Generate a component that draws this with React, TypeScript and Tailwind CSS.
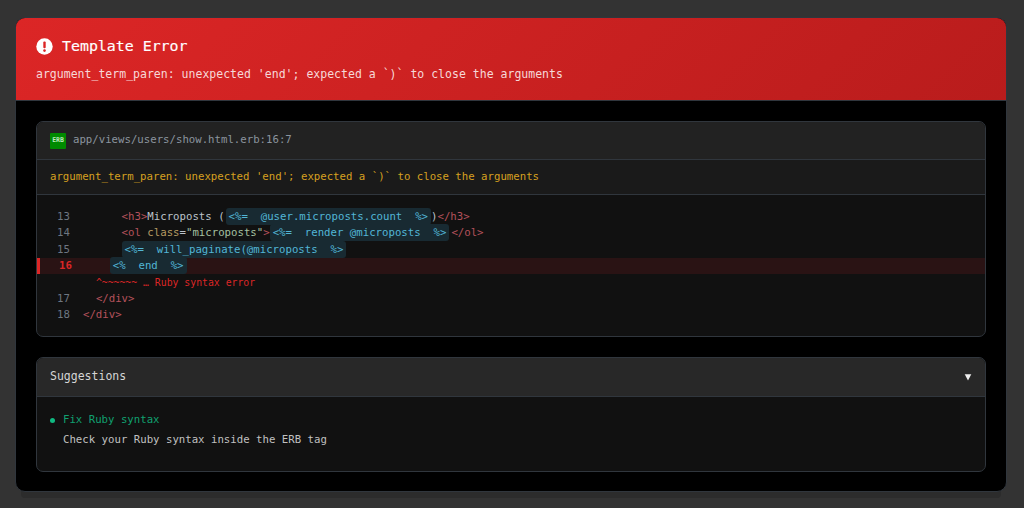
const mono = '"DejaVu Sans Mono", monospace';

function Erb({ children }: { children: string }) {
  return <span className="rounded-[3px] bg-[#182a32] px-[3px] py-[2px] text-[#52b6d6]">{children}</span>;
}

function Tag({ children }: { children: string }) {
  return <span className="text-[#b5525c]">{children}</span>;
}

function CodeLine({ num, children }: { num?: number; children: React.ReactNode }) {
  return (
    <div className="flex h-[16.35px] items-center whitespace-pre">
      <span className="w-[46px] shrink-0 pl-[20px] text-[#6e7681]">{num}</span>
      <span className="text-[#bcc3ca]">{children}</span>
    </div>
  );
}

export default function App() {
  return (
    <div className="h-[508px] overflow-hidden bg-[#333333] pl-[15px] pt-[17px]" style={{ fontFamily: mono }}>
      <div className="h-[475px] w-[992px] overflow-hidden rounded-[10px] border border-[#30363d] bg-black shadow-[0_12px_0_-6px_#2c2c2c]">
        <div className="h-[83px] border-b border-[#30363d] bg-[linear-gradient(135deg,#dc2626,#b91c1c)] px-[20px] pt-[18px]">
          <div className="flex items-center gap-[9px] text-[14.9px] leading-[21px] text-white [-webkit-text-stroke:0.15px_white]">
            <svg width="17" height="17" viewBox="0 0 17 17">
              <circle cx="8.5" cy="8.5" r="8.2" fill="#fff" />
              <rect x="7.3" y="3.6" width="2.4" height="6.6" rx="1" fill="#dc2626" />
              <circle cx="8.5" cy="12.6" r="1.3" fill="#dc2626" />
            </svg>
            Template Error
          </div>
          <p className="mt-[9px] whitespace-pre text-[11.52px] leading-[16px] text-[#f6d8d8]">
            argument_term_paren: unexpected 'end'; expected a `)` to close the arguments
          </p>
        </div>

        <div className="px-[20px] pt-[20px]">
          <div className="h-[216px] overflow-hidden rounded-[7px] border border-[#30363d] bg-[#111111]">
            <div className="flex h-[38px] items-center gap-[7px] border-b border-[#30363d] bg-[#222222] px-[13px]">
              <span className="flex h-[16px] w-[16px] items-center justify-center rounded-[1px] bg-[#008a00] text-[6.5px] font-bold text-[#bfe6bf]">
                ERB
              </span>
              <span className="text-[10.7px] text-[#8b949e]">app/views/users/show.html.erb:16:7</span>
            </div>
            <div className="flex h-[35px] items-center whitespace-pre border-b border-[#30363d] bg-[#1a1a1a] px-[13px] text-[10.7px] text-[#d6a020]">
              argument_term_paren: unexpected 'end'; expected a `)` to close the arguments
            </div>
            <div className="pt-[14px] text-[10.7px]">
              <CodeLine num={13}>
                {'      '}
                <Tag>{'<h3>'}</Tag>
                {'Microposts ('}
                <span className="ml-[1px]">
                  <Erb>{'<%=  @user.microposts.count  %>'}</Erb>
                </span>
                {')'}
                <Tag>{'</h3>'}</Tag>
              </CodeLine>
              <CodeLine num={14}>
                {'      '}
                <Tag>{'<ol '}</Tag>
                <span className="text-[#b59a62]">class</span>
                {'='}
                <span className="text-[#a5c0a0]">"microposts"</span>
                <Tag>{'>'}</Tag>
                <Erb>{'<%=  render @microposts  %>'}</Erb>
                <span className="ml-[2px]">
                  <Tag>{'</ol>'}</Tag>
                </span>
              </CodeLine>
              <CodeLine num={15}>
                {'      '}
                <Erb>{'<%=  will_paginate(@microposts  %>'}</Erb>
              </CodeLine>
              <div className="flex h-[16.35px] items-center whitespace-pre border-l-[3px] border-[#dc2626] bg-[#2a1314]">
                <span className="w-[44px] shrink-0 pl-[19px] font-bold text-[#dc2626]">16</span>
                <span className="text-[#bcc3ca]">
                  {'    '}
                  <Erb>{'<%  end  %>'}</Erb>
                </span>
              </div>
              <CodeLine>
                <span className="text-[9.8px] text-[#dc2626]">
                  <span className="text-[10.7px]">{'  '}</span>
                  {'^~~~~~~ … Ruby syntax error'}
                </span>
              </CodeLine>
              <CodeLine num={17}>
                {'  '}
                <Tag>{'</div>'}</Tag>
              </CodeLine>
              <CodeLine num={18}>
                <Tag>{'</div>'}</Tag>
              </CodeLine>
            </div>
          </div>

          <div className="mt-[20px] h-[115px] overflow-hidden rounded-[7px] border border-[#30363d] bg-[#111111]">
            <div className="flex h-[39px] items-center justify-between border-b border-[#30363d] bg-[#282828] px-[13px] text-[11.5px] text-[#d5d5d5]">
              <span>Suggestions</span>
              <svg width="8" height="8" viewBox="0 0 8 8">
                <path d="M0.7 1.2H7.3L4 7.4Z" fill="#eeeeee" />
              </svg>
            </div>
            <div className="px-[13px] pt-[15px] text-[10.7px] leading-[16px]">
              <div className="flex items-center gap-[8px] text-[#10a070]">
                <span className="h-[5px] w-[5px] rounded-full bg-[#10b981]" />
                Fix Ruby syntax
              </div>
              <div className="mt-[4px] pl-[13px] text-[#c0c0c0]">Check your Ruby syntax inside the ERB tag</div>
            </div>
          </div>
        </div>
      </div>
    </div>
  );
}
